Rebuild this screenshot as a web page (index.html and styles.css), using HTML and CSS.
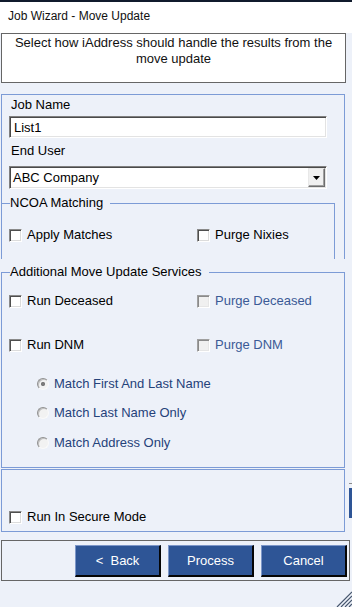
FILE: index.html
```html
<!DOCTYPE html>
<html>
<head>
<meta charset="utf-8">
<title>Job Wizard - Move Update</title>
<link rel="stylesheet" href="styles.css">
</head>
<body>
<div class="topstrip"></div>
<div class="titlebar">Job Wizard - Move Update</div>
<div class="main">
  <div class="intro">Select how iAddress should handle the results from the move update</div>

  <div class="panel job">
    <div class="flabel first">Job Name</div>
    <input class="textbox" type="text" value="List1">
    <div class="flabel">End User</div>
    <div class="combo">
      <span class="combo-value">ABC Company</span>
      <span class="combo-btn"><svg width="7" height="4" viewBox="0 0 7 4"><path d="M0 0H7L3.5 4Z" fill="#000"/></svg></span>
    </div>
    <fieldset class="group ncoa">
      <legend>NCOA Matching</legend>
      <div class="checkrow ncoa-row">
        <label class="check"><input type="checkbox"><span>Apply Matches</span></label>
        <label class="check"><input type="checkbox"><span>Purge Nixies</span></label>
      </div>
    </fieldset>
  </div>

  <fieldset class="group additional">
    <legend>Additional Move Update Services</legend>
    <div class="checkrow row-deceased">
      <label class="check"><input type="checkbox"><span>Run Deceased</span></label>
      <label class="check disabled"><input type="checkbox" disabled><span>Purge Deceased</span></label>
    </div>
    <div class="checkrow row-dnm">
      <label class="check"><input type="checkbox"><span>Run DNM</span></label>
      <label class="check disabled"><input type="checkbox" disabled><span>Purge DNM</span></label>
    </div>
    <div class="radios">
      <label class="radio r1"><input type="radio" name="match" checked disabled><span>Match First And Last Name</span></label>
      <label class="radio r2"><input type="radio" name="match" disabled><span>Match Last Name Only</span></label>
      <label class="radio r3"><input type="radio" name="match" disabled><span>Match Address Only</span></label>
    </div>
  </fieldset>

  <div class="panel secure">
    <div class="checkrow">
      <label class="check"><input type="checkbox"><span>Run In Secure Mode</span></label>
    </div>
  </div>

  <div class="buttons">
    <button class="btn" type="button">&lt;&nbsp; Back</button>
    <button class="btn" type="button">Process</button>
    <button class="btn" type="button">Cancel</button>
  </div>
</div>

<div class="edge-deco"></div>
<svg class="grip" width="16" height="16" viewBox="0 0 16 16">
  <path d="M16 1L1 16M16 5L5 16M16 9L9 16M16 13L13 16" stroke="#46566e" stroke-width="1.2" fill="none"/>
</svg>
</body>
</html>
```

FILE: styles.css
```css
html, body {
  margin: 0;
  padding: 0;
}

body {
  width: 352px;
  height: 607px;
  overflow: hidden;
  position: relative;
  background: #edf1f9;
  color: #000;
  font-family: "Liberation Sans", Arial, sans-serif;
  font-size: 13px;
}

.topstrip {
  height: 2px;
  background: #101a2c;
}

.titlebar {
  height: 31px;
  background: #fff;
  font-size: 12px;
  line-height: 28px;
  padding-left: 8px;
  color: #111;
}

.main {
  display: flex;
  flex-direction: column;
  align-items: flex-start;
}

.intro {
  margin-left: 1px;
  width: 345px;
  height: 50px;
  box-sizing: border-box;
  border: 1px solid #666;
  background: #fff;
  text-align: center;
  line-height: 16px;
  padding: 1px 8px 0;
  color: #111;
}

.panel {
  box-sizing: border-box;
  width: 344px;
  margin-left: 1px;
  border: 1px solid #7c9bd6;
}

.job {
  margin-top: 11px;
  border-bottom: none;
}

.flabel {
  margin-left: 9px;
  line-height: 16px;
  margin-top: 5px;
}

.flabel.first {
  margin-top: 2px;
}

.textbox {
  display: block;
  margin: 3px 0 0 7px;
  width: 318px;
  height: 22px;
  box-sizing: border-box;
  border: 1px solid;
  border-color: #808080 #fff #fff #808080;
  box-shadow: inset 1px 1px #4a4a4a, inset -1px -1px #e3e3e3;
  padding: 0 0 0 4px;
  font: inherit;
  color: #000;
  background: #fff;
  outline: none;
}

.combo {
  display: flex;
  align-items: center;
  margin: 7px 0 0 7px;
  width: 318px;
  height: 23px;
  box-sizing: border-box;
  border: 1px solid;
  border-color: #808080 #fff #fff #808080;
  box-shadow: inset 1px 1px #4a4a4a, inset -1px -1px #e3e3e3;
  background: #fff;
  padding: 2px 1px 2px 3px;
}

.combo-value {
  flex: 1;
  line-height: 16px;
}

.combo-btn {
  width: 17px;
  height: 19px;
  box-sizing: border-box;
  display: flex;
  align-items: center;
  justify-content: center;
  background: #f0f0f0;
  border: 1px solid;
  border-color: #e8e8e8 #6e6e6e #6e6e6e #e8e8e8;
  box-shadow: inset -1px -1px #a0a0a0;
}

.group {
  box-sizing: border-box;
  margin: 0;
  padding: 0;
  min-width: 0;
  border: 1px solid #7c9bd6;
}

.group legend {
  padding: 0 7px 0 0;
  margin-left: 8px;
  line-height: 16px;
  font-size: 13px;
}

.ncoa {
  margin: 6px 0 0 -1px;
  width: 334px;
  border-bottom: none;
}

.additional {
  margin: 5px 0 0 1px;
  width: 344px;
}

.checkrow {
  display: grid;
  grid-template-columns: 188px auto;
  padding-left: 7px;
  height: 16px;
}

.ncoa-row {
  margin: 16px 0 16px;
}

.row-deceased {
  margin-top: 13px;
}

.row-dnm {
  margin-top: 28px;
}

.secure {
  margin-top: 1px;
  padding: 39px 0 6px;
}

.check, .radio {
  display: flex;
  align-items: center;
  height: 16px;
  line-height: 16px;
  white-space: nowrap;
}

.check input {
  -webkit-appearance: none;
  appearance: none;
  width: 13px;
  height: 13px;
  margin: 0 5px 0 0;
  box-sizing: border-box;
  border: 1px solid;
  border-color: #8a8a8a #fff #fff #8a8a8a;
  box-shadow: inset 1px 1px #4e4e4e, inset -1px -1px #dcdcdc;
  background: #fff;
  flex: none;
}

.check.disabled input {
  background: #f0f0f0;
  border-color: #a0a0a0 #fff #fff #a0a0a0;
  box-shadow: inset 1px 1px #8a8a8a, inset -1px -1px #e6e6e6;
}

.check.disabled span {
  color: #3b5a96;
}

.radios {
  display: flex;
  flex-direction: column;
  padding: 23px 0 16px 35px;
}

.r2 {
  margin-top: 13px;
}

.r3 {
  margin-top: 14px;
}

.radio input {
  -webkit-appearance: none;
  appearance: none;
  width: 12px;
  height: 12px;
  margin: 0 5px 0 0;
  box-sizing: border-box;
  border-radius: 50%;
  border: 1px solid;
  border-color: #909090 #fafafa #fafafa #909090;
  box-shadow: inset 1px 1px #c0c0c0;
  background: #f2f2f2;
  flex: none;
}

.radio input:checked {
  background: radial-gradient(circle, #7c7c7c 0 1.8px, #f2f2f2 2.4px);
}

.radio span {
  color: #25427a;
}

.buttons {
  margin: 8px 0 0 1px;
  width: 349px;
  box-sizing: border-box;
  border: 1px solid #666;
  padding: 4px 2px 3px 0;
  display: flex;
  justify-content: flex-end;
  gap: 7px;
}

.btn {
  width: 86px;
  height: 32px;
  box-sizing: border-box;
  margin: 0;
  padding: 0;
  background: #2e5596;
  color: #fff;
  font: inherit;
  font-size: 13px;
  border-style: solid;
  border-width: 1px 2px 2px 1px;
  border-color: #7d97c9 #050505 #050505 #7d97c9;
  cursor: pointer;
}

.edge-deco {
  position: absolute;
  left: 349px;
  top: 483px;
  width: 3px;
  height: 34px;
  border-top: 1px solid #8c8c8c;
  background: linear-gradient(#edf1f9 0 4px, #2e5596 4px);
}

.grip {
  position: absolute;
  right: 0;
  bottom: 0;
}
```
